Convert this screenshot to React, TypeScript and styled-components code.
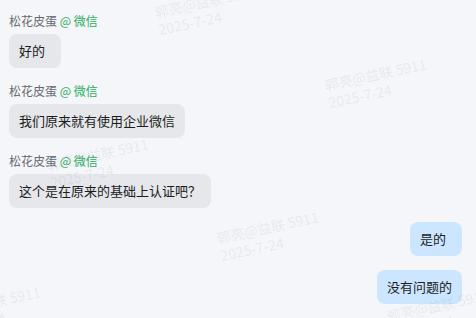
import React from "react";
import styled, { createGlobalStyle } from "styled-components";

const GlobalStyle = createGlobalStyle`
  html, body {
    margin: 0;
    padding: 0;
    background: #f5f6fa;
  }
  body {
    font-family: "Noto Sans CJK SC", "Noto Sans", sans-serif;
  }
`;

const Page = styled.div`
  position: relative;
  width: 476px;
  height: 318px;
  overflow: hidden;
  background: #f5f6fa;
`;

const ChatList = styled.div`
  display: flex;
  flex-direction: column;
  gap: 14px;
  padding: 12px 14px 0 9px;
`;

const Message = styled.div<{ $mine?: boolean }>`
  display: flex;
  flex-direction: column;
  align-items: ${(p) => (p.$mine ? "flex-end" : "flex-start")};
  gap: 4px;
`;

const Sender = styled.div`
  font-size: 12px;
  line-height: 18px;
  color: #666a70;
  white-space: nowrap;
`;

const Channel = styled.span`
  color: #2bae5e;
`;

const Bubble = styled.div<{ $mine?: boolean }>`
  min-width: 32px;
  padding: 8px 10px;
  font-size: 13px;
  line-height: 18px;
  color: #1c1c1c;
  border-radius: 8px;
  background: ${(p) => (p.$mine ? "#cce6ff" : "#e5e7ea")};
  white-space: nowrap;
`;

// faint rotated watermark laid over the chat
const Watermark = styled.div`
  position: absolute;
  transform-origin: 0 0;
  transform: rotate(-12deg);
  font-family: "Noto Sans CJK SC", "Noto Sans", sans-serif;
  font-size: 14px;
  line-height: 18px;
  color: rgba(120, 125, 140, 0.12);
  white-space: nowrap;
  pointer-events: none;
  user-select: none;
`;

type Msg = { text: string; mine?: boolean; sender?: boolean };

const messages: Msg[] = [
  { text: "好的", sender: true },
  { text: "我们原来就有使用企业微信", sender: true },
  { text: "这个是在原来的基础上认证吧？", sender: true },
  { text: "是的", mine: true },
  { text: "没有问题的", mine: true },
];

const marks = [
  [153, 3],
  [323, 76],
  [45, 156],
  [215, 229],
  [-63, 304],
  [385, 307],
];

export default function App() {
  return (
    <Page>
      <GlobalStyle />
      <ChatList>
        {messages.map((m, i) => (
          <Message key={i} $mine={m.mine}>
            {m.sender && (
              <Sender>
                松花皮蛋 <Channel>@ 微信</Channel>
              </Sender>
            )}
            <Bubble $mine={m.mine}>{m.text}</Bubble>
          </Message>
        ))}
      </ChatList>
      {marks.map(([x, y], i) => (
        <Watermark key={i} style={{ left: x, top: y }}>
          郭亮@益联 5911
          <br />
          2025-7-24
        </Watermark>
      ))}
    </Page>
  );
}
